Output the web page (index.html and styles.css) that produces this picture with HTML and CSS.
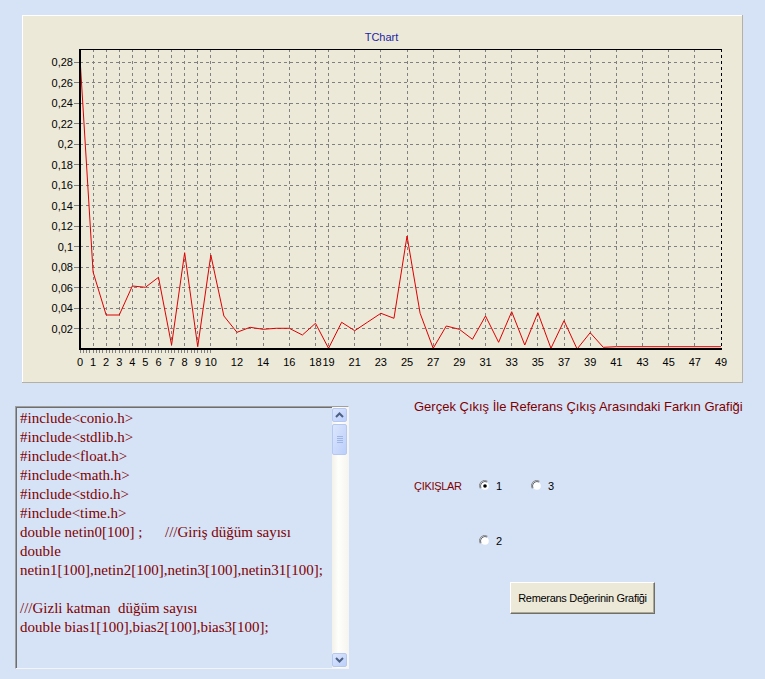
FILE: index.html
```html
<!DOCTYPE html>
<html lang="tr">
<head>
<meta charset="utf-8">
<title>TChart</title>
<link rel="stylesheet" href="styles.css">
</head>
<body>
<div class="chart-panel">
<svg class="chart" width="721" height="368" viewBox="0 0 721 368">
  <line x1="0" y1="0.5" x2="721" y2="0.5" stroke="#ffffff"/>
  <line x1="0.5" y1="0" x2="0.5" y2="368" stroke="#ffffff"/>
  <line x1="0" y1="367.5" x2="721" y2="367.5" stroke="#b4b1a3"/>
  <line x1="720.5" y1="0" x2="720.5" y2="368" stroke="#b4b1a3"/>
  <text class="ttl" x="359.5" y="26" text-anchor="middle">TChart</text>
  <g stroke="#808080" stroke-dasharray="3 3" fill="none">
    <path d="M58 313.5H699M58 293.5H699M58 272.5H699M58 252.5H699M58 231.5H699M58 211.5H699M58 190.5H699M58 170.5H699M58 149.5H699M58 129.5H699M58 108.5H699M58 88.5H699M58 67.5H699M58 47.5H699"/>
    <path d="M71.5 34V334M84.5 34V334M97.5 34V334M110.5 34V334M123.5 34V334M136.5 34V334M149.5 34V334M162.5 34V334M175.5 34V334M188.5 34V334M214.5 34V334M241.5 34V334M267.5 34V334M293.5 34V334M306.5 34V334M332.5 34V334M358.5 34V334M385.5 34V334M411.5 34V334M437.5 34V334M463.5 34V334M489.5 34V334M515.5 34V334M542.5 34V334M568.5 34V334M594.5 34V334M620.5 34V334M646.5 34V334M672.5 34V334"/>
  </g>
  <line x1="699.5" y1="34" x2="699.5" y2="334" stroke="#000" stroke-dasharray="3 3"/>
  <line x1="58" y1="34.5" x2="700" y2="34.5" stroke="#000"/>
  <g stroke="#808080">
    <path d="M52 313.5H58M52 293.5H58M52 272.5H58M52 252.5H58M52 231.5H58M52 211.5H58M52 190.5H58M52 170.5H58M52 149.5H58M52 129.5H58M52 108.5H58M52 88.5H58M52 67.5H58M52 47.5H58"/>
    <path d="M58.5 335v3M61.5 335v3M64.5 335v3M67.5 335v3M71.5 335v3M74.5 335v3M77.5 335v3M80.5 335v3M84.5 335v3M87.5 335v3M90.5 335v3M93.5 335v3M97.5 335v3M100.5 335v3M103.5 335v3M107.5 335v3M110.5 335v3M113.5 335v3M116.5 335v3M120.5 335v3M123.5 335v3M126.5 335v3M129.5 335v3M133.5 335v3M136.5 335v3M139.5 335v3M143.5 335v3M146.5 335v3M149.5 335v3M152.5 335v3M156.5 335v3M159.5 335v3M162.5 335v3M165.5 335v3M169.5 335v3M172.5 335v3M175.5 335v3M179.5 335v3M182.5 335v3M185.5 335v3M188.5 335v3"/>
  </g>
  <polyline fill="none" stroke="#dd0000" stroke-width="1" points="58,43 71.08,257 84.16,300 97.24,300 110.33,271 123.41,272.3 136.49,262.3 149.57,330 162.65,237.7 175.73,331.7 188.82,240 201.9,301 214.98,317.3 228.06,312.3 241.14,314.3 254.22,313.3 267.31,313.3 280.39,320 293.47,308.3 306.55,333.3 319.63,307.3 332.71,315.7 345.8,307 358.88,298.3 371.96,303.3 385.04,221 398.12,298.3 411.2,333.3 424.29,311 437.37,314.3 450.45,324.3 463.53,301 476.61,327.3 489.69,296.7 502.78,330 515.86,297.7 528.94,333.3 542.02,305.7 555.1,334 568.18,317.7 581.27,332.3 594.35,331.7 699,331.7"/>
  <line x1="58" y1="34" x2="58" y2="335" stroke="#000" stroke-width="2"/>
  <line x1="57" y1="334" x2="700" y2="334" stroke="#000" stroke-width="2"/>
  <g class="lbl" text-anchor="end">
    <text x="51" y="317.5">0,02</text>
    <text x="51" y="297">0,04</text>
    <text x="51" y="276.5">0,06</text>
    <text x="51" y="256">0,08</text>
    <text x="51" y="235.5">0,1</text>
    <text x="51" y="215">0,12</text>
    <text x="51" y="194.5">0,14</text>
    <text x="51" y="174">0,16</text>
    <text x="51" y="153.5">0,18</text>
    <text x="51" y="133">0,2</text>
    <text x="51" y="112.5">0,22</text>
    <text x="51" y="92">0,24</text>
    <text x="51" y="71.5">0,26</text>
    <text x="51" y="51">0,28</text>
  </g>
  <g class="lbl" text-anchor="middle">
    <text x="58" y="351">0</text>
    <text x="71.08" y="351">1</text>
    <text x="84.16" y="351">2</text>
    <text x="97.24" y="351">3</text>
    <text x="110.33" y="351">4</text>
    <text x="123.41" y="351">5</text>
    <text x="136.49" y="351">6</text>
    <text x="149.57" y="351">7</text>
    <text x="162.65" y="351">8</text>
    <text x="175.73" y="351">9</text>
    <text x="188.82" y="351">10</text>
    <text x="214.98" y="351">12</text>
    <text x="241.14" y="351">14</text>
    <text x="267.31" y="351">16</text>
    <text x="293.47" y="351">18</text>
    <text x="306.55" y="351">19</text>
    <text x="332.71" y="351">21</text>
    <text x="358.88" y="351">23</text>
    <text x="385.04" y="351">25</text>
    <text x="411.2" y="351">27</text>
    <text x="437.37" y="351">29</text>
    <text x="463.53" y="351">31</text>
    <text x="489.69" y="351">33</text>
    <text x="515.86" y="351">35</text>
    <text x="542.02" y="351">37</text>
    <text x="568.18" y="351">39</text>
    <text x="594.35" y="351">41</text>
    <text x="620.51" y="351">43</text>
    <text x="646.67" y="351">45</text>
    <text x="672.84" y="351">47</text>
    <text x="699" y="351">49</text>
  </g>
</svg>
</div>

<div class="bottom">
  <div class="memo">
    <pre class="memo-text">#include&lt;conio.h&gt;
#include&lt;stdlib.h&gt;
#include&lt;float.h&gt;
#include&lt;math.h&gt;
#include&lt;stdio.h&gt;
#include&lt;time.h&gt;
double netin0[100] ;      ///Giriş düğüm sayısı
double
netin1[100],netin2[100],netin3[100],netin31[100];

///Gizli katman  düğüm sayısı
double bias1[100],bias2[100],bias3[100];</pre>
    <div class="scrollbar">
      <div class="sb-btn">
        <svg width="9" height="6" viewBox="0 0 9 6"><path d="M1 5L4.5 1.5L8 5" fill="none" stroke="#4d6185" stroke-width="2"/></svg>
      </div>
      <div class="sb-thumb"><span></span><span></span><span></span><span></span></div>
      <div class="sb-track"></div>
      <div class="sb-btn">
        <svg width="9" height="6" viewBox="0 0 9 6"><path d="M1 1L4.5 4.5L8 1" fill="none" stroke="#4d6185" stroke-width="2"/></svg>
      </div>
    </div>
  </div>

  <div class="side">
    <div class="side-title">Gerçek Çıkış İle Referans Çıkış Arasındaki Farkın Grafiği</div>
    <div class="opts">
      <span class="opts-label">ÇIKIŞLAR</span>
      <div class="radios">
        <label class="radio r1"><svg class="rb" width="12" height="12" viewBox="0 0 12 12"><path d="M1.2 8.5A5.3 5.3 0 0 1 8.5 1.2" fill="none" stroke="#8c8c8c"/><path d="M2.2 8A4.3 4.3 0 0 1 8 2.2" fill="none" stroke="#4a4a4a"/><circle cx="6" cy="6" r="3.8" fill="#fff"/><circle cx="6" cy="6" r="1.8" fill="#000"/></svg>1</label>
        <label class="radio r3"><svg class="rb" width="12" height="12" viewBox="0 0 12 12"><path d="M1.2 8.5A5.3 5.3 0 0 1 8.5 1.2" fill="none" stroke="#8c8c8c"/><path d="M2.2 8A4.3 4.3 0 0 1 8 2.2" fill="none" stroke="#4a4a4a"/><circle cx="6" cy="6" r="3.8" fill="#fff"/></svg>3</label>
        <label class="radio r2"><svg class="rb" width="12" height="12" viewBox="0 0 12 12"><path d="M1.2 8.5A5.3 5.3 0 0 1 8.5 1.2" fill="none" stroke="#8c8c8c"/><path d="M2.2 8A4.3 4.3 0 0 1 8 2.2" fill="none" stroke="#4a4a4a"/><circle cx="6" cy="6" r="3.8" fill="#fff"/></svg>2</label>
      </div>
    </div>
    <button class="btn" type="button">Remerans Değerinin Grafiği</button>
  </div>
</div>
</body>
</html>
```

FILE: styles.css
```css
html, body {
  margin: 0;
  padding: 0;
}
body {
  width: 765px;
  height: 679px;
  overflow: hidden;
  background: #d6e3f7;
  font-family: "Liberation Sans", Arial, sans-serif;
}
.chart-panel {
  margin: 15px 0 0 22px;
  width: 721px;
  height: 368px;
  background: #ece9d8;
}
.chart {
  display: block;
}
.chart .ttl {
  font-family: "Liberation Sans", Arial, sans-serif;
  font-size: 11px;
  fill: #1f1fa5;
}
.chart .lbl {
  font-family: "Liberation Sans", Arial, sans-serif;
  font-size: 11px;
  fill: #000;
}
.bottom {
  display: flex;
  align-items: flex-start;
}
.memo {
  margin: 23px 0 0 15px;
  width: 334px;
  height: 263px;
  box-sizing: border-box;
  border-style: solid;
  border-width: 1px;
  border-color: #a0a0a0 #f4f4f4 #f4f4f4 #a0a0a0;
  box-shadow: inset 1px 1px 0 #6e6e6e;
  background: #d6e3f7;
  display: flex;
}
.memo-text {
  flex: 1;
  margin: 0;
  padding: 2px 0 0 4px;
  font-family: "Liberation Serif", "Times New Roman", serif;
  font-size: 15px;
  line-height: 19px;
  color: #800000;
  white-space: pre;
  overflow: hidden;
}
.scrollbar {
  width: 16px;
  display: flex;
  flex-direction: column;
  background: linear-gradient(to right, #f3f1ea, #fefefb 40%, #f7f5ef);
}
.sb-btn, .sb-thumb {
  margin: 1px 1px 1px 0;
  height: 14px;
  box-sizing: border-box;
  border: 1px solid #b5c8f2;
  border-radius: 2px;
  background: linear-gradient(to bottom right, #dce6fd, #bccffa);
  display: flex;
  align-items: center;
  justify-content: center;
}
.sb-thumb {
  height: 31px;
  flex-direction: column;
  gap: 1px;
}
.sb-thumb span {
  display: block;
  width: 6px;
  height: 1px;
  background: #9fb5e6;
}
.sb-track {
  flex: 1;
}
.side {
  margin-left: 65px;
  padding-top: 16px;
}
.side-title {
  font-size: 13px;
  line-height: 16px;
  color: #800000;
  white-space: nowrap;
}
.opts {
  display: flex;
  align-items: flex-start;
  margin-top: 64px;
}
.opts-label {
  width: 65px;
  font-size: 11px;
  line-height: 14px;
  letter-spacing: -0.3px;
  color: #800000;
}
.radios {
  display: grid;
  grid-template-columns: 52px 40px;
  grid-template-rows: 14px 14px;
  row-gap: 41px;
}
.radio {
  display: flex;
  align-items: center;
  gap: 5px;
  font-size: 11px;
  line-height: 14px;
  color: #000;
}
.r1 { grid-row: 1; grid-column: 1; }
.r3 { grid-row: 1; grid-column: 2; }
.r2 { grid-row: 2; grid-column: 1; }
.rb {
  display: block;
}
.btn {
  display: block;
  margin: 34px 0 0 96px;
  width: 145px;
  height: 32px;
  padding: 0;
  box-sizing: border-box;
  background: #ece9d8;
  border-style: solid;
  border-width: 1px;
  border-color: #ffffff #716f64 #716f64 #ffffff;
  box-shadow: inset -1px -1px 0 #aca899;
  font-family: "Liberation Sans", Arial, sans-serif;
  font-size: 11px;
  letter-spacing: -0.3px;
  color: #000;
}
```
